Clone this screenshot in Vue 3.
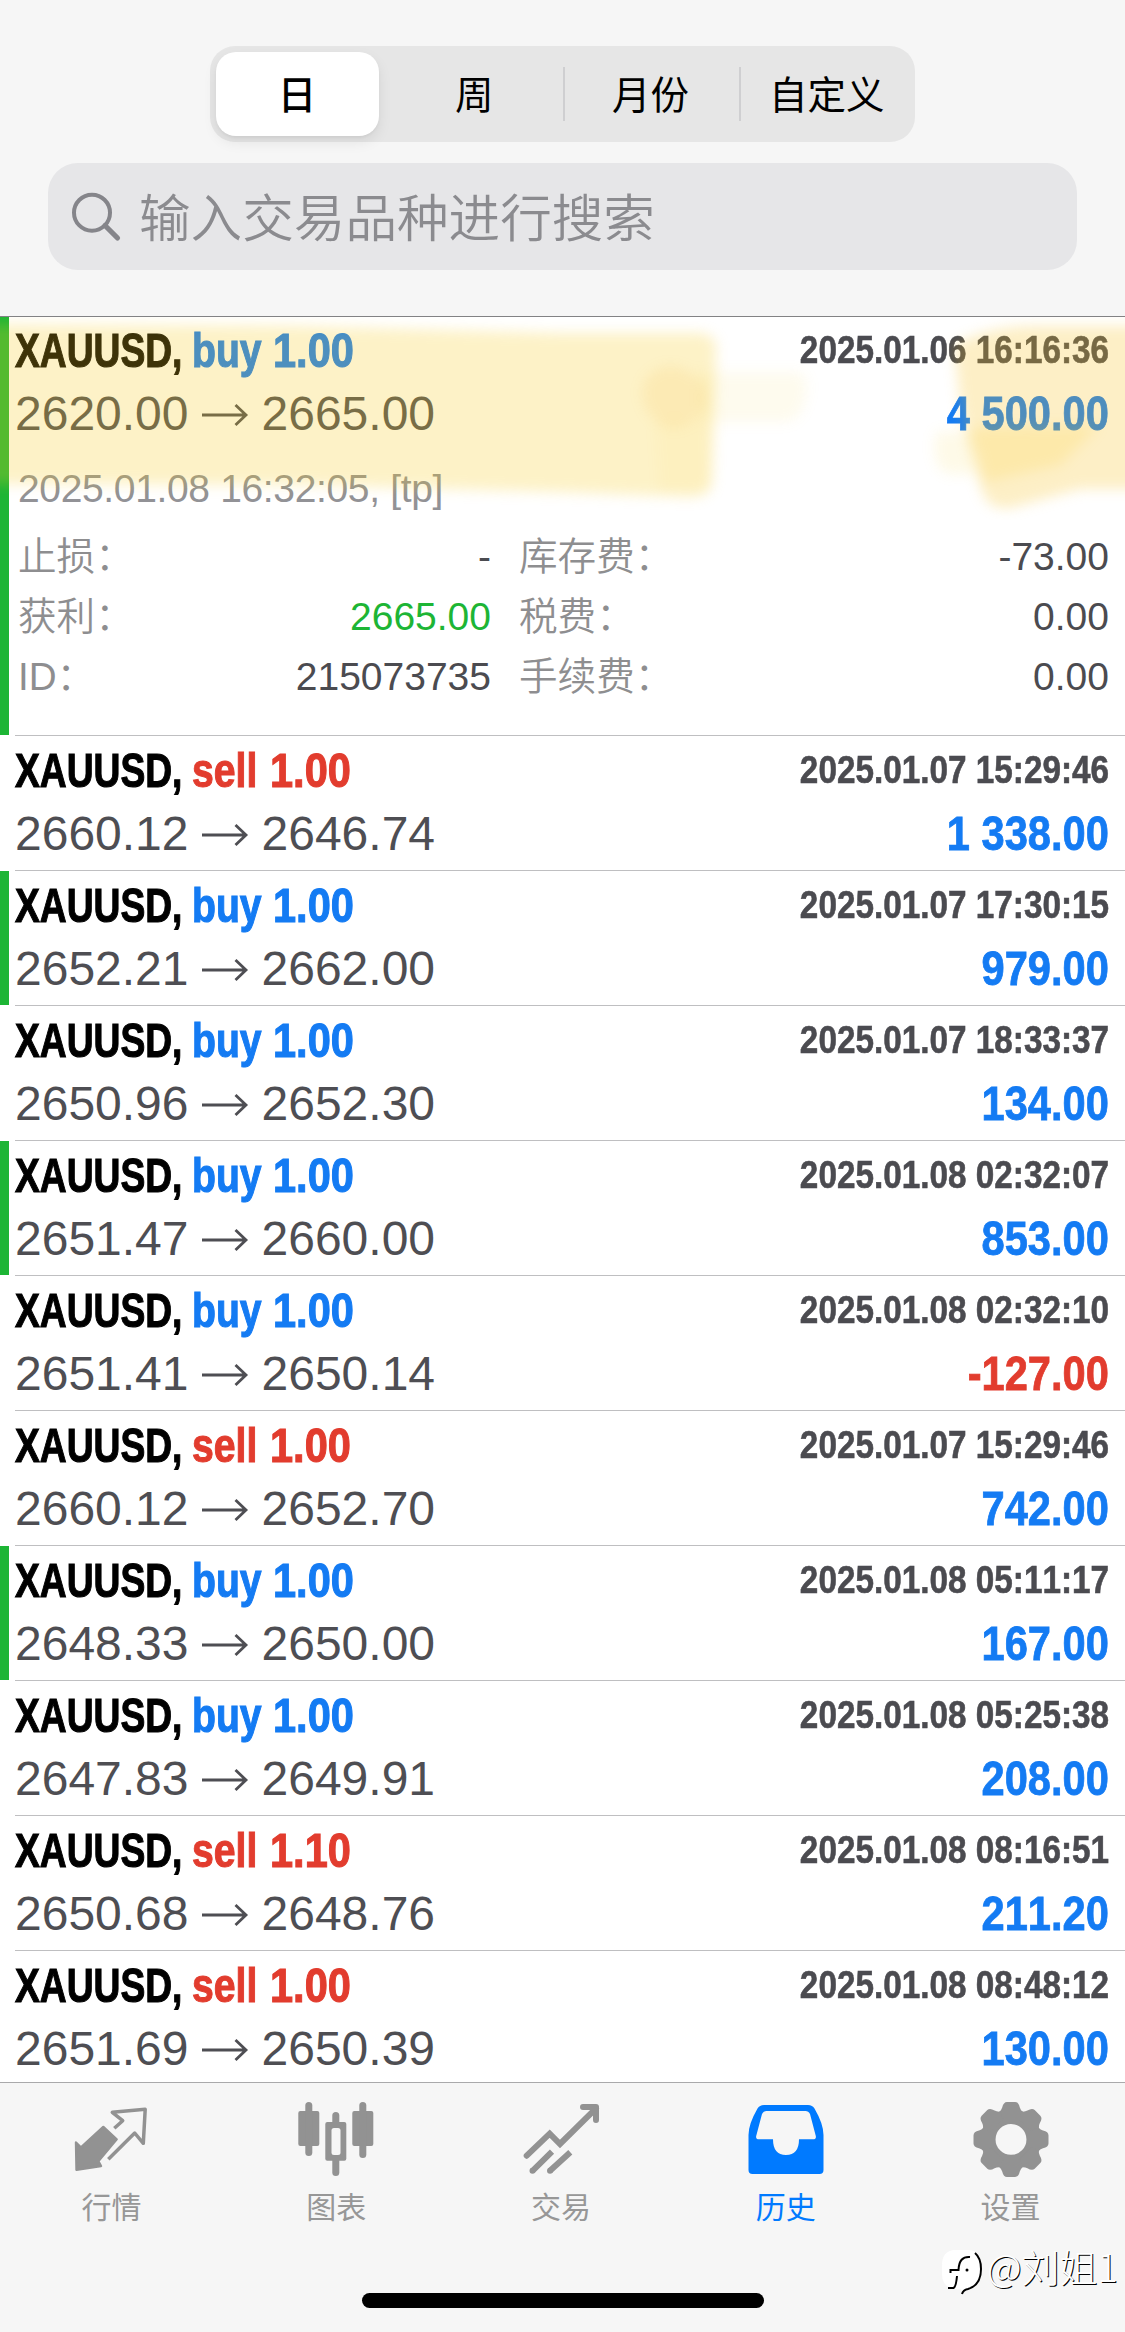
<script setup>
const segments = ['日', '周', '月份', '自定义']

const detail = [
  { label: '止损：', value: '-', label2: '库存费：', value2: '-73.00' },
  { label: '获利：', value: '2665.00', green: true, label2: '税费：', value2: '0.00' },
  { label: 'ID：', value: '215073735', label2: '手续费：', value2: '0.00' },
]

const deals = [
  { side: 'buy', lot: '1.00', from: '2620.00', to: '2665.00', time: '2025.01.06 16:16:36', profit: '4 500.00', tp: true, open: true },
  { side: 'sell', lot: '1.00', from: '2660.12', to: '2646.74', time: '2025.01.07 15:29:46', profit: '1 338.00' },
  { side: 'buy', lot: '1.00', from: '2652.21', to: '2662.00', time: '2025.01.07 17:30:15', profit: '979.00', tp: true },
  { side: 'buy', lot: '1.00', from: '2650.96', to: '2652.30', time: '2025.01.07 18:33:37', profit: '134.00' },
  { side: 'buy', lot: '1.00', from: '2651.47', to: '2660.00', time: '2025.01.08 02:32:07', profit: '853.00', tp: true },
  { side: 'buy', lot: '1.00', from: '2651.41', to: '2650.14', time: '2025.01.08 02:32:10', profit: '-127.00' },
  { side: 'sell', lot: '1.00', from: '2660.12', to: '2652.70', time: '2025.01.07 15:29:46', profit: '742.00' },
  { side: 'buy', lot: '1.00', from: '2648.33', to: '2650.00', time: '2025.01.08 05:11:17', profit: '167.00', tp: true },
  { side: 'buy', lot: '1.00', from: '2647.83', to: '2649.91', time: '2025.01.08 05:25:38', profit: '208.00' },
  { side: 'sell', lot: '1.10', from: '2650.68', to: '2648.76', time: '2025.01.08 08:16:51', profit: '211.20' },
  { side: 'sell', lot: '1.00', from: '2651.69', to: '2650.39', time: '2025.01.08 08:48:12', profit: '130.00' },
]

const teeth = [0, 45, 90, 135, 180, 225, 270, 315]
</script>

<template>
  <div class="screen">
    <header class="top">
      <div class="segmented">
        <div v-for="(s, i) in segments" :key="s" class="segment" :class="{ active: i === 0, divided: i > 1 }">
          <span>{{ s }}</span>
        </div>
      </div>
      <div class="search">
        <svg class="glass" width="52" height="52" viewBox="0 0 52 52" fill="none" stroke="#85858a" stroke-linecap="round">
          <circle cx="22" cy="21.7" r="18" stroke-width="4" />
          <path d="M35 34.5L47.5 47" stroke-width="5.2" />
        </svg>
        <span>输入交易品种进行搜索</span>
      </div>
    </header>

    <main class="list">
      <section v-for="(d, i) in deals" :key="i" class="deal" :class="{ tp: d.tp, open: d.open }">
        <div class="line">
          <div class="title">
            <span class="symbol"><b>XAUUSD,</b></span>
            <span class="side" :class="d.side"><b>{{ d.side }}</b></span>
            <span class="lot" :class="d.side"><b>{{ d.lot }}</b></span>
          </div>
          <b class="time">{{ d.time }}</b>
        </div>
        <div class="line second">
          <div class="prices">
            <span>{{ d.from }}</span>
            <svg class="arrow" width="48" height="24" viewBox="0 0 48 24" fill="none" stroke="currentColor" stroke-width="2.8">
              <path d="M1 12H45M34.500 2L45 12L34.500 22" />
            </svg>
            <span>{{ d.to }}</span>
          </div>
          <b class="profit" :class="{ loss: d.profit[0] === '-' }">{{ d.profit }}</b>
        </div>
        <template v-if="d.open">
          <div class="comment">2025.01.08 16:32:05, [tp]</div>
          <div class="details">
            <div v-for="r in detail" :key="r.label" class="detail">
              <span class="label">{{ r.label }}</span>
              <span class="value" :class="{ green: r.green }">{{ r.value }}</span>
              <span class="label col2">{{ r.label2 }}</span>
              <span class="value">{{ r.value2 }}</span>
            </div>
          </div>
          <svg class="marker" width="1125" height="220" viewBox="0 300 1125 220">
            <defs>
              <filter id="soft" x="-10%" y="-20%" width="120%" height="140%" color-interpolation-filters="sRGB"><feGaussianBlur stdDeviation="6.5" /></filter>
            </defs>
            <g fill="#f8cc20" filter="url(#soft)">
              <path d="M-40 324L300 326L560 333L700 333Q718 335 716 352L712 482Q710 497 690 497L560 492L300 485L-40 484Z" fill-opacity=".25" />
              <path d="M642 390Q645 368 672 366Q705 372 708 400Q700 425 672 428Q642 420 642 390Z" fill="#f3b62c" fill-opacity=".12" />
              <path d="M655 420H710V490H660Z" fill-opacity=".05" />
              <path d="M700 372H795Q808 372 807 388Q805 420 785 422H700Z" fill-opacity=".08" />
              <path d="M954 345Q990 325 1040 326L1160 326V489L1080 489L1010 508Q992 510 984 496Q970 460 960 400Z" fill="#f6c022" fill-opacity=".26" />
              <path d="M972 428L1100 425L1060 465L985 482Z" fill-opacity=".17" />
              <path d="M936 432H975V474H950Q930 470 936 432Z" fill-opacity=".1" />
            </g>
          </svg>
        </template>
      </section>
    </main>

    <nav class="tabs">
      <div class="tab">
        <svg width="84" height="84" viewBox="0 0 84 84">
          <path d="M7 44.500L12 49.500L34.300 29L47.700 41.300L29.300 63.200L32 68L7.500 71.700Z" fill="#929292" stroke="#929292" stroke-width="2.400" stroke-linejoin="round" />
          <path d="M45.300 30.300L53.700 22.700L43.300 14.300L76.200 11.300L74.300 45.300L65.700 35L39.300 61.300" fill="none" stroke="#929292" stroke-width="3.500" stroke-linejoin="round" />
        </svg>
        <span>行情</span>
      </div>
      <div class="tab">
        <svg width="84" height="84" viewBox="0 0 84 84" fill="#929292">
          <rect x="4.300" y="13" width="21" height="35" rx="2" />
          <rect x="11.300" y="4" width="7" height="54" rx="3.500" />
          <rect x="38.300" y="14" width="7" height="64" rx="3.500" />
          <rect x="31.300" y="24" width="21" height="38.700" rx="2" />
          <rect x="37.500" y="30" width="9" height="27" rx="2.500" fill="#f6f6f6" />
          <rect x="58.300" y="13" width="21" height="35" rx="2" />
          <rect x="65.300" y="4" width="7" height="56" rx="3.500" />
        </svg>
        <span>图表</span>
      </div>
      <div class="tab">
        <svg width="84" height="84" viewBox="0 0 84 84" fill="none" stroke="#929292" stroke-width="6">
          <path d="M7.700 57.700L30.700 35.700L41 46L77 10.300" stroke-linecap="round" />
          <path d="M64 9H77V22" stroke-linecap="round" stroke-linejoin="round" />
          <path d="M13.500 72.800L33 53.700M31 72.800L51.300 54.300" />
          <path d="M13.500 72.800h.01M31 72.800h.01" stroke-linecap="round" />
        </svg>
        <span>交易</span>
      </div>
      <div class="tab current">
        <svg width="84" height="84" viewBox="0 0 84 84" fill="#007aff" fill-rule="evenodd">
          <path d="M20 7H64Q68.500 7 70.500 10.500Q79.500 26 79.500 37V72Q79.500 76 75.500 76H8.500Q4.500 76 4.500 72V37Q4.500 26 13.500 10.500Q15.500 7 20 7ZM22.500 13Q19.500 13 18 16L12.200 38Q11.500 41.300 15 41.300H29Q29 57 42 57Q55 57 55 41.300H69Q72.500 41.300 71.800 38L66 16Q64.500 13 61.500 13Z" />
        </svg>
        <span>历史</span>
      </div>
      <div class="tab">
        <svg width="84" height="84" viewBox="0 0 84 84">
          <g transform="translate(42 41.400)" fill="#929292">
            <circle r="22.700" fill="none" stroke="#929292" stroke-width="14.500" />
            <path v-for="a in teeth" :key="a" :transform="`rotate(${a})`" d="M-11.800 -27.500Q-9.500 -29.500 -8.800 -32Q-7.500 -37.500 -4 -37.500H4Q7.500 -37.500 8.800 -32Q9.500 -29.500 11.800 -27.500L9 -20H-9Z" />
          </g>
        </svg>
        <span>设置</span>
      </div>
    </nav>
    <div class="home"></div>

    <div class="watermark">
      <svg width="46" height="48" viewBox="0 0 46 48" fill="none">
        <path d="M12 1H28Q40 2 40 16V24Q40 37 27 40L22 44L20 40H12Q1 37 1 25V16Q1 3 12 1Z" fill="#fff" />
        <path d="M29 8Q18 7 17.500 21H9.500V24M16 27Q15 38 12.500 39H7" stroke="#000" stroke-width="2" />
        <path d="M34 4Q40 9 40 20Q40 36 27 40Q22 41 21 45" stroke="#000" stroke-width="2" />
        <circle cx="26" cy="21" r="1.500" fill="#000" />
      </svg>
      <span>@刘姐1</span>
    </div>
  </div>
</template>

<style>
body { margin: 0; }
</style>

<style scoped>
.screen {
  position: relative;
  width: 1125px;
  height: 2332px;
  overflow: hidden;
  display: flex;
  flex-direction: column;
  background: #f6f6f6;
  font-family: "Liberation Sans", "Noto Sans CJK SC", sans-serif;
  font-kerning: none;
}
.top {
  flex: none;
  height: 317px;
  box-sizing: border-box;
  padding-top: 46px;
  border-bottom: 1px solid #828284;
}
.segmented {
  display: flex;
  width: 705px;
  height: 96px;
  margin-left: 210px;
  border-radius: 25px;
  background: #e6e6e6;
}
.segment {
  flex: 1;
  display: flex;
  align-items: center;
  justify-content: center;
  font: 400 38.500px/56px "Noto Sans CJK SC", sans-serif;
  color: #000;
}
.segment span { padding-bottom: 4px; }
.segment.active span {
  width: 163px;
  height: 84px;
  line-height: 80px;
  padding: 0;
  margin-right: 2px;
  text-align: center;
  border-radius: 20px;
  background: #fff;
  box-shadow: 0 6px 14px rgba(0, 0, 0, .08), 0 2px 3px rgba(0, 0, 0, .04);
  font-weight: 500;
}
.segment.divided {
  background: linear-gradient(#cfcfd1, #cfcfd1) 0 50% / 2px 54px no-repeat;
}
.search {
  display: flex;
  align-items: center;
  height: 107px;
  width: 1029px;
  margin: 21px 0 0 48px;
  border-radius: 30px;
  background: #e6e6e8;
  color: #8b8b8f;
  font: 350 51.600px/105px "Noto Sans CJK SC", sans-serif;
}
.search span { margin-top: -4px; }
.glass { margin: 0 17px 0 22px; }
.list {
  flex: none;
  height: 1765px;
  overflow: hidden;
  background: #fff;
}
.deal {
  position: relative;
  height: 135px;
  box-sizing: border-box;
  padding: 7px 16px 0 15px;
  background: linear-gradient(#bfbfc1, #bfbfc1) 15px 100% / 100% 1px no-repeat;
}
.deal.open { height: 419px; padding-top: 6px; }
.deal.tp::before {
  content: "";
  position: absolute;
  left: 0;
  top: 0;
  bottom: 1px;
  width: 9px;
  background: #1db535;
}
.line {
  display: flex;
  justify-content: space-between;
  height: 56px;
  line-height: 56px;
  font-size: 48px;
  white-space: nowrap;
}
.second { margin-top: 7px; }
.title { display: flex; }
.title b { display: inline-block; transform-origin: 0 50%; -webkit-text-stroke: 1.100px currentColor; }
.symbol { width: 177px; }
.symbol b { transform: scaleX(.775); }
.side { width: 81px; }
.side.sell { width: 78px; }
.side b { transform: scaleX(.815); }
.lot b { transform: scaleX(.865); }
.buy { color: #147bf3; }
.sell { color: #e23c2e; }
.time {
  font-size: 39px;
  line-height: 53px;
  color: #4b4b50;
  transform: scaleX(.854);
  transform-origin: 100% 50%;
  -webkit-text-stroke: .6px currentColor;
}
.profit {
  color: #147bf3;
  transform: scaleX(.867);
  transform-origin: 100% 50%;
  -webkit-text-stroke: .8px currentColor;
}
.loss { color: #e23c2e; }
.prices {
  display: flex;
  align-items: center;
  color: #4e4e53;
}
.arrow { margin: 2px 13px 0 12px; }
.comment {
  margin: 24px 0 0 3px;
  font-size: 39px;
  line-height: 46px;
  letter-spacing: -.35px;
  color: #929296;
}
.details { margin: 15px 0 0 3px; }
.detail {
  display: grid;
  grid-template-columns: 160px 313px 200px 1fr;
  height: 60px;
  line-height: 60px;
  font-size: 39px;
  white-space: nowrap;
}
.label {
  font-family: "Liberation Sans", "Noto Sans CJK SC", sans-serif;
  font-weight: 350;
  font-size: 38.600px;
  color: #8e8e90;
}
.col2 { padding-left: 28px; }
.value { text-align: right; color: #4b4b50; }
.green { color: #1db535; }
.marker {
  position: absolute;
  left: 0;
  top: -17px;
  clip-path: inset(17px 0 0 0);
}
.tabs {
  flex: none;
  display: flex;
  height: 211px;
  box-sizing: border-box;
  border-top: 1px solid #a9a9ab;
  padding: 15px 2px 0 0;
  margin-left: -1px;
}
.tab {
  flex: 1;
  display: flex;
  flex-direction: column;
  align-items: center;
  font: 400 30px/44px "Noto Sans CJK SC", sans-serif;
  color: #979797;
}
.tab span { margin-top: 1px; }
.current { color: #007aff; }
.home {
  width: 402px;
  height: 15px;
  margin-left: 362px;
  border-radius: 8px;
  background: #000;
}
.watermark {
  position: absolute;
  left: 941px;
  top: 2249px;
  display: flex;
  font: 300 38px/33px "Noto Sans CJK SC", sans-serif;
  color: #fff;
  text-shadow: 1px 1px 0 #000;
  white-space: nowrap;
}
</style>
